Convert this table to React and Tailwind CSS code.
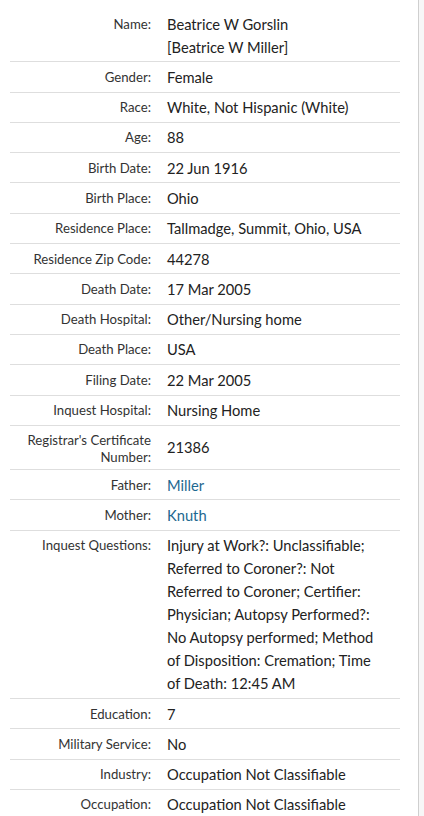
const rows = [
  { label: 'Name:', value: ['Beatrice W Gorslin', '[Beatrice W Miller]'] },
  { label: 'Gender:', value: 'Female' },
  { label: 'Race:', value: 'White, Not Hispanic (White)' },
  { label: 'Age:', value: '88' },
  { label: 'Birth Date:', value: '22 Jun 1916' },
  { label: 'Birth Place:', value: 'Ohio' },
  { label: 'Residence Place:', value: 'Tallmadge, Summit, Ohio, USA' },
  { label: 'Residence Zip Code:', value: '44278' },
  { label: 'Death Date:', value: '17 Mar 2005' },
  { label: 'Death Hospital:', value: 'Other/Nursing home' },
  { label: 'Death Place:', value: 'USA' },
  { label: 'Filing Date:', value: '22 Mar 2005' },
  { label: 'Inquest Hospital:', value: 'Nursing Home' },
  { label: ["Registrar's Certificate", 'Number:'], value: '21386', center: true },
  { label: 'Father:', value: 'Miller', link: true },
  { label: 'Mother:', value: 'Knuth', link: true },
  {
    label: 'Inquest Questions:',
    value: [
      'Injury at Work?: Unclassifiable;',
      'Referred to Coroner?: Not',
      'Referred to Coroner; Certifier:',
      'Physician; Autopsy Performed?:',
      'No Autopsy performed; Method',
      'of Disposition: Cremation; Time',
      'of Death: 12:45 AM',
    ],
  },
  { label: 'Education:', value: '7' },
  { label: 'Military Service:', value: 'No' },
  { label: 'Industry:', value: 'Occupation Not Classifiable' },
  { label: 'Occupation:', value: 'Occupation Not Classifiable' },
]

function Lines({ text }) {
  if (!Array.isArray(text)) return text
  return text.map((t, i) => <div key={i}>{t}</div>)
}

export default function App() {
  return (
    <div className="min-h-screen bg-[#f7f7f7] flex" style={{ fontFamily: 'Lato, "Noto Sans", sans-serif' }}>
      {/* record panel */}
      <div className="w-[419px] shrink-0 bg-white border-r border-[#cfcfcf] pt-[9px] pl-[10px]">
        <div className="w-[390px]">
          {rows.map((row, i) => (
            <div
              key={i}
              className={`flex pt-[3.5px] pb-[2.8px] ${i < rows.length - 1 ? 'border-b border-[#dedede]' : ''} ${row.center ? 'items-center' : 'items-start'}`}
            >
              {/* label */}
              <div className="w-[141px] shrink-0 text-right text-[13.2px] leading-[17px] pt-[3px] text-[#333333]">
                <Lines text={row.label} />
              </div>
              {/* value */}
              <div className={`pl-[16px] text-[14.7px] leading-[23px] ${row.link ? 'text-[#1d6890]' : 'text-[#222222]'}`}>
                <Lines text={row.value} />
              </div>
            </div>
          ))}
        </div>
      </div>
    </div>
  )
}
